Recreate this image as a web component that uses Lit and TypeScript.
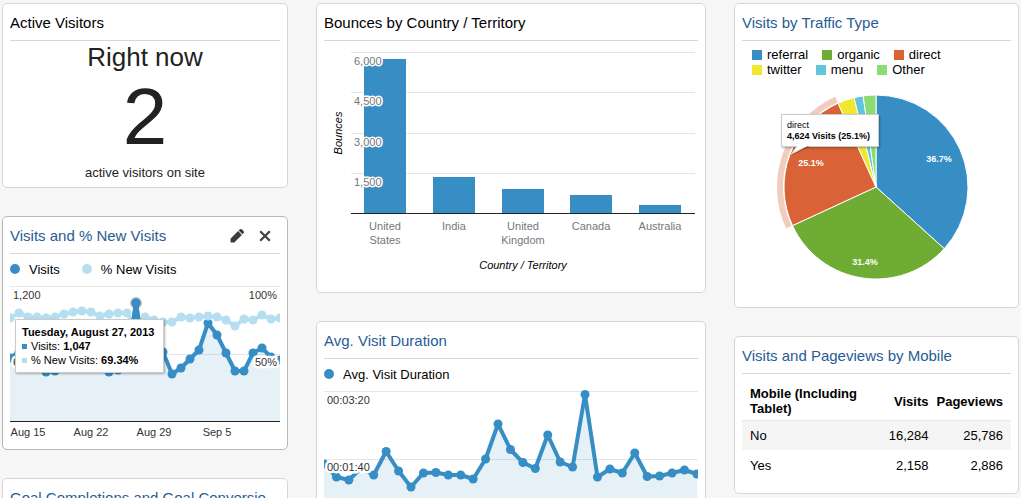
import { LitElement, html, svg, css } from "lit";
import { customElement, property } from "lit/decorators.js";

type Point = [number, number];

const toPoints = (ys: number[], step: number): Point[] => ys.map((y, i) => [i * step, y]);
const toPath = (pts: Point[]) => "M" + pts.map(([x, y]) => `${x.toFixed(1)} ${y}`).join("L");

const chartText = css`
  svg {
    display: block;
    width: 100%;
    height: auto;
  }
  text {
    font-family: "Liberation Sans", Arial, sans-serif;
    font-size: 11px;
    fill: #333;
  }
  .halo {
    stroke: #fff;
    stroke-width: 3px;
    stroke-linejoin: round;
    paint-order: stroke;
  }
  .wide {
    stroke-width: 5px;
  }
  .grid {
    stroke: #e6e6e6;
  }
  .axis {
    stroke: #222;
  }
`;

@customElement("widget-card")
class WidgetCard extends LitElement {
  @property() heading = "";
  @property({ type: Boolean }) link = false;
  @property({ type: Boolean, reflect: true }) active = false;

  static styles = css`
    :host {
      display: block;
      box-sizing: border-box;
      padding: 0 7px;
      border: 1px solid #d6d6d6;
      border-radius: 5px;
      background: #fff;
    }
    :host([active]) {
      border-color: #b8b8b8;
    }
    .head {
      display: flex;
      align-items: center;
      height: 34px;
      padding-top: 2px;
      border-bottom: 1px solid #d6d6d6;
    }
    h2 {
      flex: 1;
      min-width: 0;
      margin: 0;
      overflow: hidden;
      white-space: nowrap;
      font-size: 15px;
      font-weight: 400;
      line-height: 20px;
      color: #000;
    }
    a {
      color: #285c94;
      text-decoration: none;
    }
    .tools {
      display: flex;
      gap: 12px;
      padding-right: 7px;
    }
    button {
      display: block;
      width: 16px;
      height: 16px;
      padding: 0;
      border: 0;
      background: none;
      cursor: pointer;
    }
    svg {
      display: block;
      width: 16px;
      height: 16px;
    }
  `;

  render() {
    return html`
      <header class="head">
        <h2>${this.link ? html`<a href="#report">${this.heading}</a>` : this.heading}</h2>
        ${this.active
          ? html`<div class="tools">
              <button aria-label="Edit widget">
                <svg viewBox="0 0 16 16" fill="#3c3c3c">
                  <path d="M1.5 10.7 9.1 3.1 12.9 6.900 5.300 14.500H1.500z" />
                  <path d="M9.7 2.500 10.700 1.500q1.200-1.100 2.400 0l1.400 1.400q1.100 1.200 0 2.400L13.500 6.300z" />
                </svg>
              </button>
              <button aria-label="Remove widget">
                <svg viewBox="0 0 16 16" fill="none" stroke="#444" stroke-width="2.3">
                  <path d="M3.2 3.2 12.8 12.8M12.8 3.2 3.2 12.8" />
                </svg>
              </button>
            </div>`
          : ""}
      </header>
      <slot></slot>
    `;
  }
}

@customElement("series-legend")
class SeriesLegend extends LitElement {
  @property({ attribute: false }) items: { label: string; color: string }[] = [];

  static styles = css`
    :host {
      display: flex;
      gap: 22px;
      height: 30px;
      padding-bottom: 2px;
      align-items: center;
      font-size: 13px;
      color: #000;
    }
    .item {
      display: flex;
      align-items: center;
      gap: 9px;
    }
    .dot {
      width: 10px;
      height: 10px;
      border-radius: 50%;
    }
  `;

  render() {
    return this.items.map(
      (i) => html`<span class="item"><span class="dot" style="background:${i.color}"></span>${i.label}</span>`
    );
  }
}

@customElement("visits-chart")
class VisitsChart extends LitElement {
  visits = toPoints(
    [72, 66, 64, 70, 86, 85, 72, 66, 68, 64, 74, 86, 84, 76, 17, 76, 70, 66, 88, 82, 73, 64, 37, 49, 67, 85, 85, 67, 62, 71, 74],
    9
  );
  fresh = toPoints(
    [32, 27, 31, 31, 32, 31, 28, 26, 25, 26, 30, 28, 27, 27, 41, 31, 34, 36, 36, 31, 32, 31, 30, 31, 34, 40, 33, 34, 29, 33, 32],
    9
  );

  static styles = [
    chartText,
    css`
      :host {
        display: block;
        position: relative;
      }
      .tip {
        position: absolute;
        left: 5px;
        top: 33px;
        padding: 5px 9px 5px 6px;
        border: 1px solid #ccc;
        background: #fff;
        box-shadow: 1px 1px 2px rgba(0, 0, 0, 0.3);
        font-size: 11px;
        line-height: 14px;
        color: #000;
        white-space: nowrap;
      }
      .row {
        display: flex;
        align-items: center;
        gap: 4px;
      }
      .key {
        width: 5px;
        height: 5px;
      }
      .dark {
        background: #368ec5;
      }
      .light {
        background: #b5def0;
      }
    `,
  ];

  render() {
    const dark = toPath(this.visits);
    const peak = this.visits[14];
    return html`
      <svg viewBox="0 0 270 163">
        <line class="grid" x1="0" x2="270" y1="0.5" y2="0.5" />
        <line class="grid" x1="0" x2="270" y1="68.5" y2="68.5" />
        <path d="${dark}L270 135L0 135Z" fill="#368ec5" fill-opacity="0.13" />
        <path d=${dark} fill="none" stroke="#368ec5" stroke-width="4" stroke-linejoin="round" />
        ${this.visits.map(([x, y]) => svg`<circle cx=${x} cy=${y} r="4.5" fill="#368ec5" />`)}
        <path d=${toPath(this.fresh)} fill="none" stroke="#b5def0" stroke-width="4" />
        ${this.fresh.map(([x, y]) => svg`<circle cx=${x} cy=${y} r="4.5" fill="#b5def0" />`)}
        <path d=${toPath(this.visits.slice(13, 16))} fill="none" stroke="#368ec5" stroke-width="4" stroke-linejoin="round" />
        <circle cx=${peak[0]} cy=${peak[1]} r="6" fill="#777" fill-opacity="0.45" />
        <circle cx=${peak[0]} cy=${peak[1]} r="4.5" fill="#368ec5" />
        <line class="axis" x1="0" x2="270" y1="135.5" y2="135.5" />
        <text class="halo wide" x="3" y="13">1,200</text>
        <text class="halo wide" x="3" y="80">600</text>
        <text class="halo wide" x="267" y="13" text-anchor="end">100%</text>
        <text class="halo wide" x="267" y="80" text-anchor="end">50%</text>
        <text x="18" y="150" text-anchor="middle">Aug 15</text>
        <text x="81" y="150" text-anchor="middle">Aug 22</text>
        <text x="144" y="150" text-anchor="middle">Aug 29</text>
        <text x="207" y="150" text-anchor="middle">Sep 5</text>
      </svg>
      <div class="tip" role="tooltip">
        <b>Tuesday, August 27, 2013</b>
        <div class="row"><span class="key dark"></span><span>Visits: <b>1,047</b></span></div>
        <div class="row"><span class="key light"></span><span>% New Visits: <b>69.34%</b></span></div>
      </div>
    `;
  }
}

@customElement("bounces-chart")
class BouncesChart extends LitElement {
  bars = [
    { x: 40, top: 18, label: ["United", "States"] },
    { x: 109, top: 136, label: ["India"] },
    { x: 178, top: 148, label: ["United", "Kingdom"] },
    { x: 246, top: 154, label: ["Canada"] },
    { x: 315, top: 164, label: ["Australia"] },
  ];
  ticks = [
    { y: 11.5, label: "6,000" },
    { y: 51.5, label: "4,500" },
    { y: 92.5, label: "3,000" },
    { y: 132.5, label: "1,500" },
  ];

  static styles = [
    chartText,
    css`
      :host {
        display: block;
      }
      .tick {
        fill: #777;
      }
      .title {
        fill: #000;
        font-style: italic;
      }
    `,
  ];

  render() {
    return html`
      <svg viewBox="0 0 374 251">
        ${this.ticks.map((t) => svg`<line class="grid" x1="27" x2="371" y1=${t.y} y2=${t.y} />`)}
        ${this.bars.map((b) => svg`<rect x=${b.x} y=${b.top} width="42" height=${172 - b.top} fill="#368ec5" />`)}
        <line class="axis" x1="27" x2="371" y1="172.5" y2="172.5" />
        ${this.ticks.map((t) => svg`<text class="halo tick" x="30" y=${t.y + 12}>${t.label}</text>`)}
        ${this.bars.map((b) =>
          b.label.map((l, i) => svg`<text class="tick" x=${b.x + 21} y=${189 + i * 14} text-anchor="middle">${l}</text>`)
        )}
        <text class="title" x="199" y="228" text-anchor="middle">Country / Territory</text>
        <text class="title" transform="translate(18 92) rotate(-90)" text-anchor="middle">Bounces</text>
      </svg>
    `;
  }
}

@customElement("duration-chart")
class DurationChart extends LitElement {
  points = toPoints(
    [73, 86, 89, 77, 84, 60.5, 80, 96, 82, 81.5, 84, 84, 88, 68, 33, 58.5, 71.5, 77.5, 44, 71, 76, 3.5, 86, 78, 82, 62, 85.5, 85, 82, 79, 83],
    12.43
  );

  static styles = [
    chartText,
    css`
      :host {
        display: block;
      }
      svg {
        overflow: visible;
      }
    `,
  ];

  render() {
    const line = toPath(this.points);
    return html`
      <svg viewBox="0 0 374 163">
        <line class="grid" x1="0" x2="374" y1="0.5" y2="0.5" />
        <line class="grid" x1="0" x2="374" y1="68.5" y2="68.5" />
        <clipPath id="plot"><rect x="0" y="-6" width="374" height="142" /></clipPath>
        <g clip-path="url(#plot)">
          <path d="${line}L374 135L0 135Z" fill="#368ec5" fill-opacity="0.13" />
          <path d=${line} fill="none" stroke="#368ec5" stroke-width="4" stroke-linejoin="round" />
          ${this.points.map(([x, y]) => svg`<circle cx=${x} cy=${y} r="4.5" fill="#368ec5" />`)}
        </g>
        <line class="axis" x1="0" x2="374" y1="135.5" y2="135.5" />
        <text class="halo wide" x="3" y="13">00:03:20</text>
        <text class="halo wide" x="3" y="80">00:01:40</text>
      </svg>
    `;
  }
}

@customElement("traffic-pie")
class TrafficPie extends LitElement {
  slices = [
    { label: "referral", color: "#368ec5", from: 0, to: 132.1 },
    { label: "organic", color: "#6fac34", from: 132.1, to: 245.2 },
    { label: "direct", color: "#d96236", from: 245.2, to: 335.6 },
    { label: "twitter", color: "#f1e72f", from: 335.6, to: 346.2 },
    { label: "menu", color: "#62c5dc", from: 346.2, to: 352 },
    { label: "Other", color: "#8bdc72", from: 352, to: 360 },
  ];

  static styles = [
    chartText,
    css`
      :host {
        display: block;
        position: relative;
        color: #000;
      }
      .legend {
        display: flex;
        flex-direction: column;
        padding: 6px 10px 1px;
      }
      .line {
        display: flex;
        gap: 14px;
        font-size: 13px;
        line-height: 15px;
      }
      .item {
        display: flex;
        align-items: center;
        gap: 5px;
      }
      .swatch {
        width: 10px;
        height: 10px;
      }
      .share {
        font-size: 9px;
        font-weight: 700;
        fill: #fff;
      }
      .tip {
        position: absolute;
        left: 39px;
        top: 73px;
        padding: 5px 8px 4px 5px;
        border: 1px solid #ccc;
        background: #fff;
        box-shadow: 1px 1px 2px rgba(0, 0, 0, 0.3);
        font-size: 9px;
        line-height: 11px;
        white-space: nowrap;
      }
      .tip b {
        display: block;
      }
      .tail {
        position: absolute;
        left: 9px;
        top: 100%;
        width: 20px;
        height: 11px;
      }
    `,
  ];

  at(deg: number, r: number) {
    const a = (deg * Math.PI) / 180;
    return `${(134 + r * Math.sin(a)).toFixed(2)} ${(109 - r * Math.cos(a)).toFixed(2)}`;
  }

  render() {
    const item = (s: { label: string; color: string }) =>
      html`<span class="item"><span class="swatch" style="background:${s.color}"></span>${s.label}</span>`;
    return html`
      <div class="legend">
        <div class="line">${this.slices.slice(0, 3).map(item)}</div>
        <div class="line">${this.slices.slice(3).map(item)}</div>
      </div>
      <svg viewBox="0 0 269 229">
        <path
          d="M${this.at(245.2, 96)}A96 96 0 0 1 ${this.at(335.6, 96)}"
          fill="none"
          stroke="#f1cdbe"
          stroke-width="6"
        />
        ${this.slices.map(
          (s) => svg`<path
            d="M134 109L${this.at(s.from, 92)}A92 92 0 0 1 ${this.at(s.to, 92)}Z"
            fill=${s.color} stroke="#fff" stroke-width="1" />`
        )}
        <text class="share" x="197" y="84" text-anchor="middle">36.7%</text>
        <text class="share" x="123" y="187" text-anchor="middle">31.4%</text>
        <text class="share" x="69" y="88" text-anchor="middle">25.1%</text>
      </svg>
      <div class="tip" role="tooltip">
        direct<b>4,624 Visits (25.1%)</b>
        <svg class="tail" viewBox="0 0 20 11">
          <path d="M1 9.500 18 1V0H6z" fill="#000" fill-opacity="0.25" />
          <path d="M6 0 0 8.500 16 0z" fill="#fff" stroke="#ccc" stroke-width="0.8" />
          <path d="M6.500 0h9" stroke="#fff" stroke-width="2" />
        </svg>
      </div>
    `;
  }
}

@customElement("app-root")
class AppRoot extends LitElement {
  static styles = css`
    :host {
      display: block;
      box-sizing: border-box;
      height: 100vh;
      padding: 3px 2px 0;
      overflow-y: auto;
      scrollbar-width: none;
      background: #f6f6f6;
      font-family: "Liberation Sans", Arial, sans-serif;
    }
    .board {
      display: grid;
      grid-template-columns: 286fr 390fr 285fr;
      gap: 28px;
      align-items: start;
    }
    .column {
      display: flex;
      flex-direction: column;
      gap: 28px;
      min-width: 0;
    }
    .now {
      display: flex;
      flex-direction: column;
      align-items: center;
      padding-bottom: 2px;
      color: #222;
    }
    .when {
      font-size: 26px;
      line-height: 32px;
    }
    .count {
      font-size: 80px;
      line-height: 88px;
    }
    .note {
      font-size: 13px;
      line-height: 24px;
    }
    table {
      width: 100%;
      margin-bottom: 13px;
      border-collapse: collapse;
      font-size: 13px;
      line-height: 15px;
      color: #000;
    }
    th {
      padding: 12px 0 4px 8px;
      text-align: left;
    }
    td {
      padding: 8px 0 7px 8px;
    }
    .num {
      width: 1px;
      text-align: right;
    }
    .num:last-child {
      padding-right: 8px;
    }
    .shade {
      background: #f5f5f5;
      box-shadow: inset 0 1px #e8e8e8;
    }
  `;

  render() {
    return html`
      <main class="board">
        <div class="column">
          <widget-card heading="Active Visitors">
            <div class="now">
              <span class="when">Right now</span>
              <span class="count">2</span>
              <span class="note">active visitors on site</span>
            </div>
          </widget-card>
          <widget-card heading="Visits and % New Visits" link active>
            <series-legend
              .items=${[
                { label: "Visits", color: "#368ec5" },
                { label: "% New Visits", color: "#b5def0" },
              ]}
            ></series-legend>
            <visits-chart></visits-chart>
          </widget-card>
          <widget-card heading="Goal Completions and Goal Conversio" link></widget-card>
        </div>
        <div class="column">
          <widget-card heading="Bounces by Country / Territory">
            <bounces-chart></bounces-chart>
          </widget-card>
          <widget-card heading="Avg. Visit Duration" link>
            <series-legend .items=${[{ label: "Avg. Visit Duration", color: "#368ec5" }]}></series-legend>
            <duration-chart></duration-chart>
          </widget-card>
        </div>
        <div class="column">
          <widget-card heading="Visits by Traffic Type" link>
            <traffic-pie></traffic-pie>
          </widget-card>
          <widget-card heading="Visits and Pageviews by Mobile" link>
            <table>
              <thead>
                <tr>
                  <th scope="col">Mobile (Including Tablet)</th>
                  <th class="num" scope="col">Visits</th>
                  <th class="num" scope="col">Pageviews</th>
                </tr>
              </thead>
              <tbody>
                <tr class="shade">
                  <td>No</td>
                  <td class="num">16,284</td>
                  <td class="num">25,786</td>
                </tr>
                <tr>
                  <td>Yes</td>
                  <td class="num">2,158</td>
                  <td class="num">2,886</td>
                </tr>
              </tbody>
            </table>
          </widget-card>
        </div>
      </main>
    `;
  }
}
